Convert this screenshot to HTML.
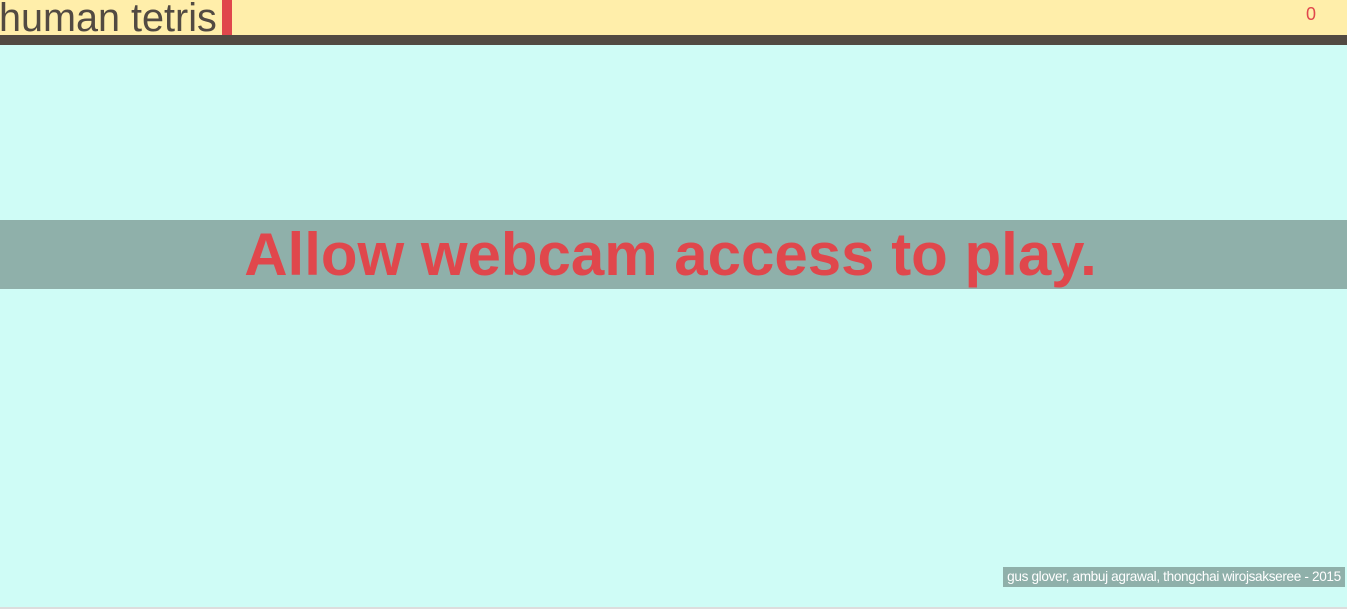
<!DOCTYPE html>
<html><head><style>
*{margin:0;padding:0}
body{width:1347px;height:613px;overflow:hidden;background:#fff;font-family:"Liberation Sans",Arial,sans-serif;position:relative}
#top{position:absolute;left:0;top:0;width:1347px;height:35px;background:#ffeeaa}
#title{position:absolute;left:-1px;top:-4px;font-size:39.6px;color:#524a42;line-height:44px;white-space:nowrap}
#red{position:absolute;left:222px;top:0;width:10px;height:35px;background:#e0474c}
#score{position:absolute;left:1306px;top:4px;font-size:18px;color:#e0474c}
#bar{position:absolute;left:0;top:35px;width:1347px;height:10px;background:#524a42}
#main{position:absolute;left:0;top:45px;width:1347px;height:562px;background:#cffcf6}
#line{position:absolute;left:0;top:607px;width:1347px;height:2px;background:#ddd}
#banner{position:absolute;left:-6px;top:220px;width:1353px;height:69px;background:#8fb0aa;text-align:center;color:#e0474c;font-weight:bold;font-size:60px;line-height:69px}
#foot{position:absolute;left:1003px;top:567px;width:342px;height:20px;background:#8fb0aa;color:#fff;font-size:13.6px;letter-spacing:-0.35px;line-height:20px;text-align:center;white-space:nowrap}
</style></head><body>
<div id="top"><div id="title">human tetris</div><div id="red"></div><div id="score">0</div></div>
<div id="bar"></div>
<div id="main"></div>
<div id="line"></div>
<div id="banner">Allow webcam access to play.</div>
<div id="foot">gus glover, ambuj agrawal, thongchai wirojsakseree - 2015</div>
</body></html>
